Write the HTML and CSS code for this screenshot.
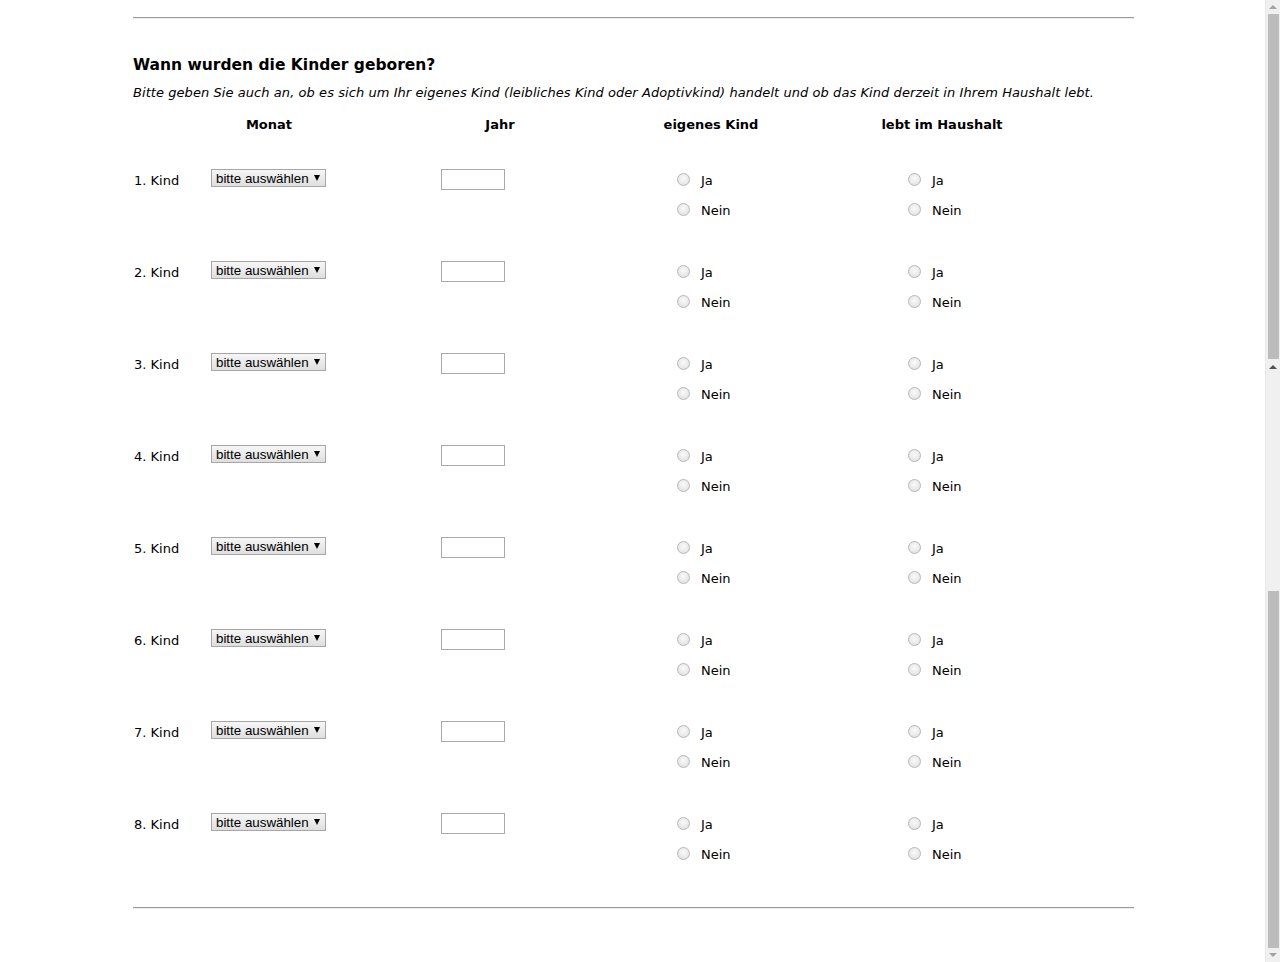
FILE: index.html
```html
<!DOCTYPE html>
<html lang="de">
<head>
    <meta charset="UTF-8">
    <title>Kinder</title>
    <link rel="stylesheet" href="styles.css">
</head>
<body>
    <div id="page">
        <div id="survey">
            <hr class="divider">

            <h2 class="question">Wann wurden die Kinder geboren?</h2>
            <p class="hint">Bitte geben Sie auch an, ob es sich um Ihr eigenes Kind (leibliches Kind oder Adoptivkind) handelt und ob das Kind derzeit in Ihrem Haushalt lebt.</p>

            <div class="col-heads">
                <div>Monat</div>
                <div>Jahr</div>
                <div>eigenes Kind</div>
                <div>lebt im Haushalt</div>
            </div>

            <div id="children"></div>

            <hr class="divider">
        </div>
    </div>

    <div class="scrollbar">
        <div class="sb-arrow up"></div>
        <div class="sb-thumb first"></div>
        <div class="sb-arrow up dark"></div>
        <div class="sb-track"></div>
        <div class="sb-thumb second"></div>
        <div class="sb-arrow down"></div>
    </div>

    <script>
        const children = document.getElementById('children');

        function radioPair(name) {
            return `
                <label class="choice"><input type="radio" name="${name}" value="1"> Ja</label>
                <label class="choice"><input type="radio" name="${name}" value="2"> Nein</label>`;
        }

        for (let i = 1; i <= 8; i++) {
            const row = document.createElement('div');
            row.className = 'child-row';
            row.innerHTML = `
                <div class="child-label">${i}. Kind</div>
                <div class="cell">
                    <span class="select-wrap">
                        <select name="monat${i}">
                            <option>bitte auswählen</option>
                        </select>
                    </span>
                </div>
                <div class="cell"><input type="text" class="year" name="jahr${i}" maxlength="4"></div>
                <div class="cell radios">${radioPair('eigen' + i)}</div>
                <div class="cell radios">${radioPair('haushalt' + i)}</div>`;
            children.appendChild(row);
        }
    </script>
</body>
</html>
```

FILE: styles.css
```css
html, body {
    height: 100%;
}
body {
    margin: 0;
    display: flex;
    overflow: hidden;
    font-family: "DejaVu Sans", Verdana, sans-serif;
    font-size: 13px;
    color: #000;
    background: #fff;
}
#page {
    flex: 1;
    overflow: hidden;
}
#survey {
    width: 1001px;
    margin-left: 133px;
}
.divider {
    margin: 17px 0 0;
    border: none;
    border-top: 1px solid #9a9a9a;
    border-bottom: 1px solid #eeeeee;
}
#children + .divider {
    margin-top: 5px;
}
.question {
    margin: 37px 0 0;
    font-size: 15.5px;
    line-height: 19px;
    font-weight: bold;
}
.hint {
    margin: 10px 0 0;
    font-style: italic;
    line-height: 16px;
    letter-spacing: 0.065px;
}
.col-heads {
    display: grid;
    grid-template-columns: 272px 190px 232px 230px;
    margin-top: 16px;
    font-weight: bold;
    line-height: 16px;
    text-align: center;
}
#children {
    margin-top: 33px;
}
.child-row {
    display: grid;
    grid-template-columns: 77px 231px 231px 231px 231px;
    padding-bottom: 33px;
}
.child-label {
    line-height: 30px;
    padding-left: 1px;
}
.cell {
    padding-top: 3px;
}
.select-wrap {
    position: relative;
    display: inline-block;
    margin-left: 1px;
}
.select-wrap select {
    appearance: none;
    -webkit-appearance: none;
    width: 115px;
    height: 18px;
    margin: 0;
    padding: 0 0 0 4px;
    border: 1px solid #a6a6a6;
    border-radius: 0;
    background: linear-gradient(#f6f6f6, #dedede);
    font-family: "Liberation Sans", Arial, sans-serif;
    font-size: 13.33px;
    color: #000;
}
.select-wrap::after {
    content: "";
    position: absolute;
    right: 6px;
    top: 6px;
    border-left: 3px solid transparent;
    border-right: 3px solid transparent;
    border-top: 6px solid #000;
    pointer-events: none;
}
.year {
    width: 64px;
    height: 21px;
    margin: 0;
    padding: 0 3px;
    box-sizing: border-box;
    border: 1px solid #a9a9a9;
    font-size: 13px;
}
.radios {
    padding-top: 0;
    margin-top: -1px;
}
.choice {
    display: flex;
    align-items: center;
    height: 30px;
    gap: 11px;
}
.choice input {
    appearance: none;
    -webkit-appearance: none;
    width: 13px;
    height: 13px;
    margin: 0 0 2px 5px;
    border: 1px solid #b8b8b8;
    border-radius: 50%;
    background: radial-gradient(circle at 50% 40%, #fafafa, #dcdcdc);
    box-sizing: border-box;
}

/* plain window scrollbar on the right */
.scrollbar {
    width: 15px;
    flex: none;
    display: flex;
    flex-direction: column;
    align-items: center;
    background: #f0f0f0;
    border-left: 1px solid #e8e8e8;
    box-sizing: border-box;
}
.sb-thumb {
    width: 11px;
    background: #bcbcbc;
}
.sb-thumb.first {
    height: 345px;
}
.sb-thumb.second {
    height: 357px;
}
.sb-track {
    flex: 1;
}
.sb-arrow {
    width: 0;
    height: 0;
    margin: 5px 0;
    border-left: 4px solid transparent;
    border-right: 4px solid transparent;
}
.sb-arrow.up {
    border-bottom: 4px solid #a3a3a3;
}
.sb-arrow.up.dark {
    margin-top: 6px;
    border-bottom-color: #505050;
}
.sb-arrow.down {
    border-top: 4px solid #a3a3a3;
}
```
